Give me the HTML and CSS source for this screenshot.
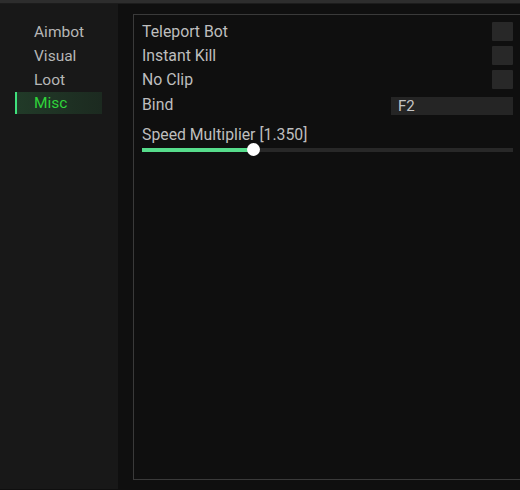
FILE: index.html
```html
<!DOCTYPE html>
<html lang="en">
<head>
  <meta charset="UTF-8">
  <title>Misc</title>
  <link rel="stylesheet" href="styles.css">
</head>
<body>
  <div class="topbar"></div>
  <div class="main">
    <nav class="sidebar">
      <div class="tab">Aimbot</div>
      <div class="tab">Visual</div>
      <div class="tab">Loot</div>
      <div class="tab active">Misc</div>
    </nav>
    <section class="content">
      <div class="panel">
        <div class="row"><span>Teleport Bot</span><span class="check"></span></div>
        <div class="row"><span>Instant Kill</span><span class="check"></span></div>
        <div class="row"><span>No Clip</span><span class="check"></span></div>
        <div class="row"><span>Bind</span><span class="bind">F2</span></div>
        <div class="slider">
          <div class="slider-label">Speed Multiplier [1.350]</div>
          <div class="track">
            <div class="fill" style="width: 111px"></div>
            <div class="knob" style="left: 111px"></div>
          </div>
        </div>
      </div>
    </section>
  </div>
</body>
</html>
```

FILE: styles.css
```css
* { box-sizing: border-box; }
body {
  margin: 0;
  width: 520px;
  height: 490px;
  overflow: hidden;
  background: #0f0f0f;
  font-family: Roboto, "Liberation Sans", sans-serif;
  font-size: 15.5px;
  color: #bebebe;
}
.topbar {
  height: 4px;
  background: #2d2d2d;
  border-bottom: 1px solid #1c1c1c;
}
.main {
  display: flex;
  height: 485px;
}
.sidebar {
  width: 118px;
  background: #181818;
  padding-top: 16px;
}
.tab {
  margin-left: 15px;
  width: 87px;
  height: 24px;
  line-height: 24px;
  padding-left: 19px;
  color: #b6b6b6;
}
.tab.active {
  height: 22px;
  line-height: 22px;
  padding-left: 17px;
  border-left: 2px solid #3fe07c;
  color: #2fd43a;
  background: linear-gradient(90deg, #213a28, #1c2a20);
}
.content {
  flex: 1;
  background: #0f0f0f;
  padding: 10px 0 9px 15px;
}
.panel {
  height: 100%;
  border: 1px solid #3a3a3a;
  border-right: none;
  padding: 4px 7px 0 8px;
  font-size: 15.8px;
}
.row {
  display: flex;
  justify-content: space-between;
  align-items: center;
  height: 24.3px;
}
.check {
  width: 21px;
  height: 19px;
  background: #282828;
  border-radius: 1px;
}
.bind {
  width: 122px;
  height: 18px;
  line-height: 18px;
  margin-top: 3px;
  padding-left: 7px;
  font-size: 15px;
  background: #252525;
  color: #c4c4c4;
}
.slider { margin-top: 10px; }
.slider-label {
  line-height: 18px;
  margin-bottom: 4px;
}
.track {
  position: relative;
  height: 4px;
  background: #282828;
}
.fill {
  height: 100%;
  background: #56dc8b;
}
.knob {
  position: absolute;
  top: -5px;
  width: 13px;
  height: 13px;
  margin-left: -6px;
  border-radius: 50%;
  background: #fff;
}
```
